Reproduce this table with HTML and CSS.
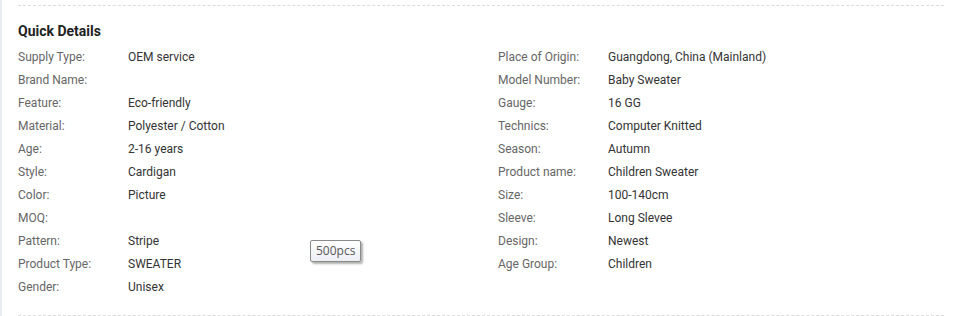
FILE: index.html
```html
<!DOCTYPE html>
<html lang="en">
<head>
<meta charset="utf-8">
<title>Quick Details</title>
<link rel="stylesheet" href="styles.css">
</head>
<body>
<div class="page">
  <section class="details">
    <h3 class="details-title">Quick Details</h3>
    <div class="details-grid">
      <dl class="col">
        <div class="row"><dt>Supply Type:</dt><dd>OEM service</dd></div>
        <div class="row"><dt>Brand Name:</dt><dd></dd></div>
        <div class="row"><dt>Feature:</dt><dd>Eco-friendly</dd></div>
        <div class="row"><dt>Material:</dt><dd>Polyester / Cotton</dd></div>
        <div class="row"><dt>Age:</dt><dd>2-16 years</dd></div>
        <div class="row"><dt>Style:</dt><dd>Cardigan</dd></div>
        <div class="row"><dt>Color:</dt><dd>Picture</dd></div>
        <div class="row"><dt>MOQ:</dt><dd></dd></div>
        <div class="row"><dt>Pattern:</dt><dd>Stripe</dd></div>
        <div class="row"><dt>Product Type:</dt><dd>SWEATER</dd></div>
        <div class="row"><dt>Gender:</dt><dd>Unisex</dd></div>
      </dl>
      <dl class="col">
        <div class="row"><dt>Place of Origin:</dt><dd>Guangdong, China (Mainland)</dd></div>
        <div class="row"><dt>Model Number:</dt><dd>Baby Sweater</dd></div>
        <div class="row"><dt>Gauge:</dt><dd>16 GG</dd></div>
        <div class="row"><dt>Technics:</dt><dd>Computer Knitted</dd></div>
        <div class="row"><dt>Season:</dt><dd>Autumn</dd></div>
        <div class="row"><dt>Product name:</dt><dd>Children Sweater</dd></div>
        <div class="row"><dt>Size:</dt><dd>100-140cm</dd></div>
        <div class="row"><dt>Sleeve:</dt><dd>Long Slevee</dd></div>
        <div class="row"><dt>Design:</dt><dd>Newest</dd></div>
        <div class="row"><dt>Age Group:</dt><dd>Children</dd></div>
      </dl>
    </div>
  </section>
  <div class="tooltip">500pcs</div>
</div>
</body>
</html>
```
FILE: styles.css
```css
html, body {
  margin: 0;
  padding: 0;
  background: #fff;
}

.page {
  position: relative;
  min-height: 316px;
  border-left: 2px solid #e9ecf0;
  padding: 5px 15px 0 16px;
  box-sizing: border-box;
  font-family: Roboto, "Liberation Sans", sans-serif;
}

.details {
  border-top: 1px dashed #dcdcdc;
  border-bottom: 1px dashed #dcdcdc;
  padding: 15px 0 16px;
}

.details-title {
  margin: 0 0 5px;
  font-size: 14px;
  line-height: 20px;
  font-weight: 700;
  color: #222;
}

.details-grid {
  display: grid;
  grid-template-columns: 480px 1fr;
}

.col {
  margin: 0;
}

.row {
  display: flex;
  height: 23px;
  line-height: 23px;
  font-size: 12px;
}

.row dt {
  width: 110px;
  flex: none;
  color: #666;
}

.row dd {
  margin: 0;
  color: #333;
}

/* hover hint floating over the MOQ row */
.tooltip {
  position: absolute;
  left: 308px;
  top: 240px;
  height: 20px;
  padding: 0 5px;
  line-height: 19px;
  font-family: "Open Sans", "DejaVu Sans", sans-serif;
  font-size: 12px;
  color: #575757;
  background: linear-gradient(#ffffff, #eceef3);
  border: 1px solid #8a8a8a;
  border-radius: 2px;
  box-shadow: 2px 2px 2px rgba(0, 0, 0, 0.3);
}
```
